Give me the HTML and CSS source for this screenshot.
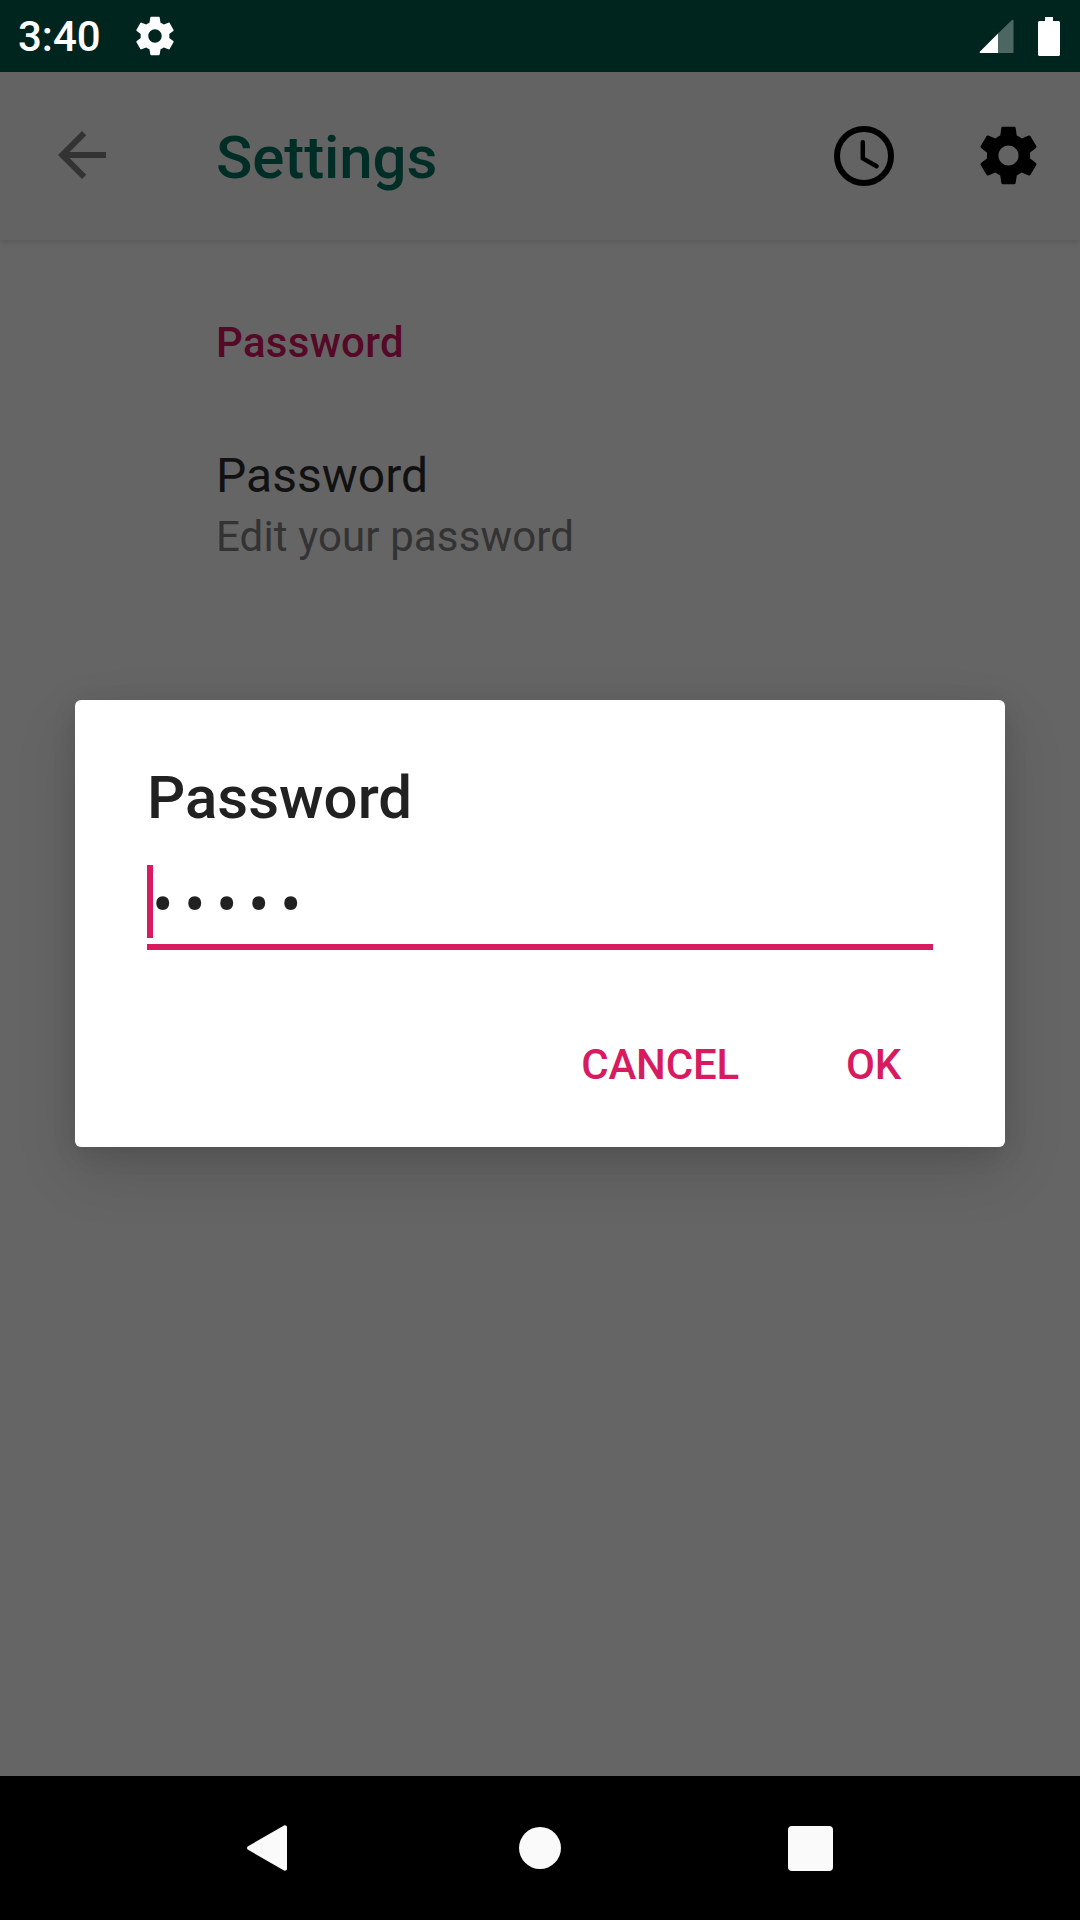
FILE: index.html
```html
<!DOCTYPE html>
<html lang="en">
<head>
    <meta charset="UTF-8">
    <meta name="viewport" content="width=device-width, initial-scale=1.0">
    <title>Settings</title>
    <link rel="stylesheet" href="styles.css">
</head>
<body>
    <div class="screen">
        <div class="status-bar">
            <span class="clock-text">3:40</span>
            <svg class="status-gear" viewBox="0 0 24 24"><path d="M19.43 12.98c.04-.32.07-.64.07-.98s-.03-.66-.07-.98l2.11-1.65c.19-.15.24-.42.12-.64l-2-3.46c-.12-.22-.39-.3-.61-.22l-2.49 1c-.52-.4-1.08-.73-1.69-.98l-.38-2.65C14.46 2.18 14.25 2 14 2h-4c-.25 0-.46.18-.49.42l-.38 2.65c-.61.25-1.17.59-1.69.98l-2.49-1c-.23-.09-.49 0-.61.22l-2 3.46c-.13.22-.07.49.12.64l2.11 1.65c-.04.32-.07.65-.07.98s.03.66.07.98l-2.11 1.65c-.19.15-.24.42-.12.64l2 3.46c.12.22.39.3.61.22l2.49-1c.52.4 1.08.73 1.69.98l.38 2.65c.03.24.24.42.49.42h4c.25 0 .46-.18.49-.42l.38-2.65c.61-.25 1.17-.59 1.69-.98l2.49 1c.23.09.49 0 .61-.22l2-3.46c.12-.22.07-.49-.12-.64l-2.11-1.65zM12 15.5c-1.93 0-3.5-1.57-3.5-3.5s1.57-3.5 3.5-3.5 3.5 1.57 3.5 3.5-1.57 3.5-3.5 3.5z"/></svg>
            <div class="status-right">
                <svg class="signal" viewBox="0 0 35 35">
                    <path class="signal-empty" d="M19 14.500L33 1c.6-.6 1.500-.2 1.500.6V33c0 .6-.4 1-1 1H19z"/>
                    <path class="signal-full" d="M19 14.500L.8 32.800c-.5.5-.2 1.200.5 1.200H19z"/>
                </svg>
                <svg class="battery" viewBox="0 0 22 39"><path d="M7 0h8v4h5.5c.8 0 1.5.7 1.5 1.5V37.500c0 .8-.7 1.500-1.500 1.500H1.500C.7 39 0 38.300 0 37.500V5.500C0 4.700.7 4 1.500 4H7z"/></svg>
            </div>
        </div>

        <div class="app-bar">
            <svg class="back-icon" viewBox="0 0 24 24"><path d="M20 11H7.830l5.590-5.590L12 4l-8 8 8 8 1.410-1.410L7.830 13H20v-2z"/></svg>
            <span class="app-title">Settings</span>
            <svg class="history-icon" viewBox="0 0 24 24">
                <circle cx="12" cy="12" r="9" fill="none" stroke="#000" stroke-width="2"/>
                <polyline points="11.600,7.400 11.600,12.800 16.200,15.400" fill="none" stroke="#000" stroke-width="1.500" stroke-linecap="round" stroke-linejoin="round"/>
            </svg>
            <svg class="gear-icon" viewBox="0 0 24 24"><path d="M19.43 12.98c.04-.32.07-.64.07-.98s-.03-.66-.07-.98l2.11-1.65c.19-.15.24-.42.12-.64l-2-3.46c-.12-.22-.39-.3-.61-.22l-2.49 1c-.52-.4-1.08-.73-1.69-.98l-.38-2.65C14.46 2.18 14.25 2 14 2h-4c-.25 0-.46.18-.49.42l-.38 2.65c-.61.25-1.17.59-1.69.98l-2.49-1c-.23-.09-.49 0-.61.22l-2 3.46c-.13.22-.07.49.12.64l2.11 1.65c-.04.32-.07.65-.07.98s.03.66.07.98l-2.11 1.65c-.19.15-.24.42-.12.64l2 3.46c.12.22.39.3.61.22l2.49-1c.52.4 1.08.73 1.69.98l.38 2.65c.03.24.24.42.49.42h4c.25 0 .46-.18.49-.42l.38-2.65c.61-.25 1.17-.59 1.69-.98l2.49 1c.23.09.49 0 .61-.22l2-3.46c.12-.22.07-.49-.12-.64l-2.11-1.65zM12 15.5c-1.93 0-3.5-1.57-3.5-3.5s1.57-3.5 3.5-3.5 3.5 1.57 3.5 3.5-1.57 3.5-3.5 3.5z"/></svg>
        </div>

        <div class="content">
            <div class="section-title">Password</div>
            <div class="pref-title">Password</div>
            <div class="pref-summary">Edit your password</div>

            <div class="dialog">
                <h2 class="dialog-title">Password</h2>
                <div class="field">
                    <span class="caret"></span>
                    <span class="field-value">•••••</span>
                </div>
                <div class="dialog-actions">
                    <span class="action">CANCEL</span>
                    <span class="action">OK</span>
                </div>
            </div>
        </div>

        <div class="nav-bar">
            <svg class="nav-back" viewBox="0 0 42 48"><path d="M38 1.500L2 22.300c-1.300.8-1.300 2.600 0 3.400L38 46.500c1.300.8 3-.2 3-1.700V3.200c0-1.500-1.700-2.500-3-1.700z"/></svg>
            <span class="nav-home"></span>
            <span class="nav-recent"></span>
        </div>
    </div>
</body>
</html>
```

FILE: styles.css
```css
* {
    box-sizing: border-box;
}
body {
    margin: 0;
    font-family: Roboto, sans-serif;
    background-color: #656565;
}
.screen {
    width: 1080px;
    height: 1920px;
    display: flex;
    flex-direction: column;
    overflow: hidden;
}

.status-bar {
    height: 72px;
    flex: none;
    display: flex;
    align-items: center;
    padding: 0 20px 0 18px;
    background-color: #00251f;
    color: #ffffff;
}
.clock-text {
    font-size: 42px;
    font-weight: 500;
    width: 114px;
}
.status-gear {
    width: 46px;
    height: 46px;
    fill: #ffffff;
}
.status-right {
    margin-left: auto;
    display: flex;
    align-items: center;
    gap: 24px;
}
.signal {
    width: 35px;
    height: 35px;
    margin-top: 1px;
}
.signal-full {
    fill: #ffffff;
}
.signal-empty {
    fill: #4d6662;
}
.battery {
    width: 22px;
    height: 39px;
    fill: #ffffff;
}

.app-bar {
    height: 168px;
    flex: none;
    display: flex;
    align-items: center;
    padding: 0 37px 2px 46px;
    background-color: #636363;
    box-shadow: 0 2px 6px rgba(0,0,0,0.12);
    position: relative;
}
.back-icon {
    width: 72px;
    height: 72px;
    fill: #333333;
}
.app-title {
    margin-left: 98px;
    margin-top: 5px;
    font-size: 60px;
    font-weight: 500;
    letter-spacing: -0.1px;
    color: #002e26;
}
.history-icon {
    margin-left: auto;
    margin-top: 1px;
    width: 72px;
    height: 72px;
}
.gear-icon {
    margin-left: 74px;
    width: 69px;
    height: 69px;
    fill: #000000;
}

.content {
    flex: 1;
    position: relative;
    padding: 78px 0 0 216px;
}
.section-title {
    font-size: 42px;
    font-weight: 500;
    letter-spacing: 0.3px;
    color: #560827;
}
.pref-title {
    margin-top: 80px;
    font-size: 48px;
    color: #111111;
}
.pref-summary {
    margin-top: 8px;
    font-size: 42px;
    letter-spacing: 0.13px;
    color: #333333;
}

.dialog {
    position: absolute;
    left: 75px;
    top: 460px;
    width: 930px;
    height: 447px;
    padding: 62px 72px 0;
    background-color: #ffffff;
    border-radius: 6px;
    box-shadow: 0 24px 60px rgba(0,0,0,0.14), 0 6px 24px rgba(0,0,0,0.1);
}
.dialog-title {
    margin: 0;
    font-size: 60px;
    font-weight: 500;
    color: #212121;
}
.field {
    margin-top: 32px;
    height: 85px;
    display: flex;
    align-items: flex-start;
    border-bottom: 6px solid #d81b60;
}
.caret {
    width: 6px;
    height: 73px;
    background-color: #d81b60;
}
.field-value {
    margin-left: -1px;
    font-size: 64px;
    letter-spacing: 10.4px;
    line-height: 82px;
    color: #212121;
}
.dialog-actions {
    margin-top: 90px;
    display: flex;
    justify-content: flex-end;
    gap: 107px;
    padding-right: 32px;
}
.action {
    font-size: 42px;
    font-weight: 500;
    letter-spacing: -0.2px;
    color: #d81b60;
}

.nav-bar {
    height: 144px;
    flex: none;
    background-color: #000000;
    display: flex;
    align-items: center;
    padding-left: 246px;
}
.nav-back {
    width: 42px;
    height: 48px;
    fill: #fafafa;
}
.nav-home {
    margin-left: 231px;
    width: 42px;
    height: 42px;
    border-radius: 50%;
    background-color: #fafafa;
}
.nav-recent {
    margin-left: 227px;
    width: 45px;
    height: 45px;
    border-radius: 4px;
    background-color: #fafafa;
}
```
